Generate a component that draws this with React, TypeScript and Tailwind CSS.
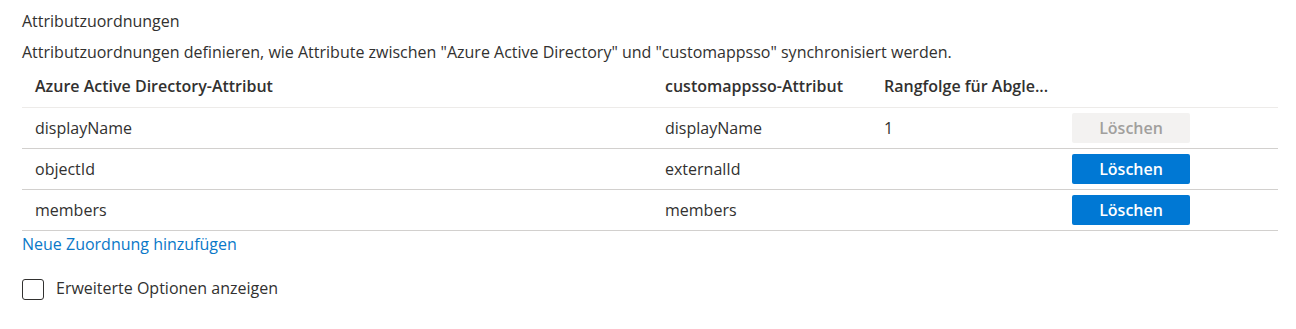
import React from "react";

const rows = [
  { source: "displayName", target: "displayName", rank: "1", disabled: true },
  { source: "objectId", target: "externalId", rank: "", disabled: false },
  { source: "members", target: "members", rank: "", disabled: false },
];

export default function App() {
  return (
    <div className="w-[1296px] h-[329px] bg-white text-[#323130] font-['Open_Sans',sans-serif] text-[16px] px-[22px] pt-[9px]">
      <div className="leading-[24px]">Attributzuordnungen</div>
      <div className="mt-[8px] leading-[22px]">
        Attributzuordnungen definieren, wie Attribute zwischen "Azure Active Directory" und "customappsso" synchronisiert werden.
      </div>
      <div className="w-[1256px] mt-[1px]">
        <div className="flex h-[44px] items-center font-semibold border-b border-[#edebe9]">
          <div className="w-[630px] pl-[13px]">Azure Active Directory-Attribut</div>
          <div className="w-[219px] pl-[13px]">customappsso-Attribut</div>
          <div className="w-[201px] pl-[13px]">Rangfolge für Abgle...</div>
        </div>
        {rows.map((r, i) => (
          <div key={i} className="flex h-[41px] items-center border-b border-[#d2d0ce]">
            <div className="w-[630px] pl-[13px]">{r.source}</div>
            <div className="w-[219px] pl-[13px]">{r.target}</div>
            <div className="w-[201px] pl-[13px]">{r.rank}</div>
            <button
              className={
                r.disabled
                  ? "w-[118px] h-[30px] rounded-[2px] bg-[#f3f2f1] text-[#a19f9d] font-semibold"
                  : "w-[118px] h-[30px] rounded-[2px] bg-[#0078d4] text-white font-semibold"
              }
            >
              Löschen
            </button>
          </div>
        ))}
      </div>
      <div className="mt-[2px] leading-[22px] text-[#0a78c8]">Neue Zuordnung hinzufügen</div>
      <label className="flex items-center mt-[23px]">
        <span className="w-[22px] h-[21px] rounded-[3px] border border-[#323130] bg-white" />
        <span className="ml-[12px] -mt-[2px]">Erweiterte Optionen anzeigen</span>
      </label>
    </div>
  );
}
